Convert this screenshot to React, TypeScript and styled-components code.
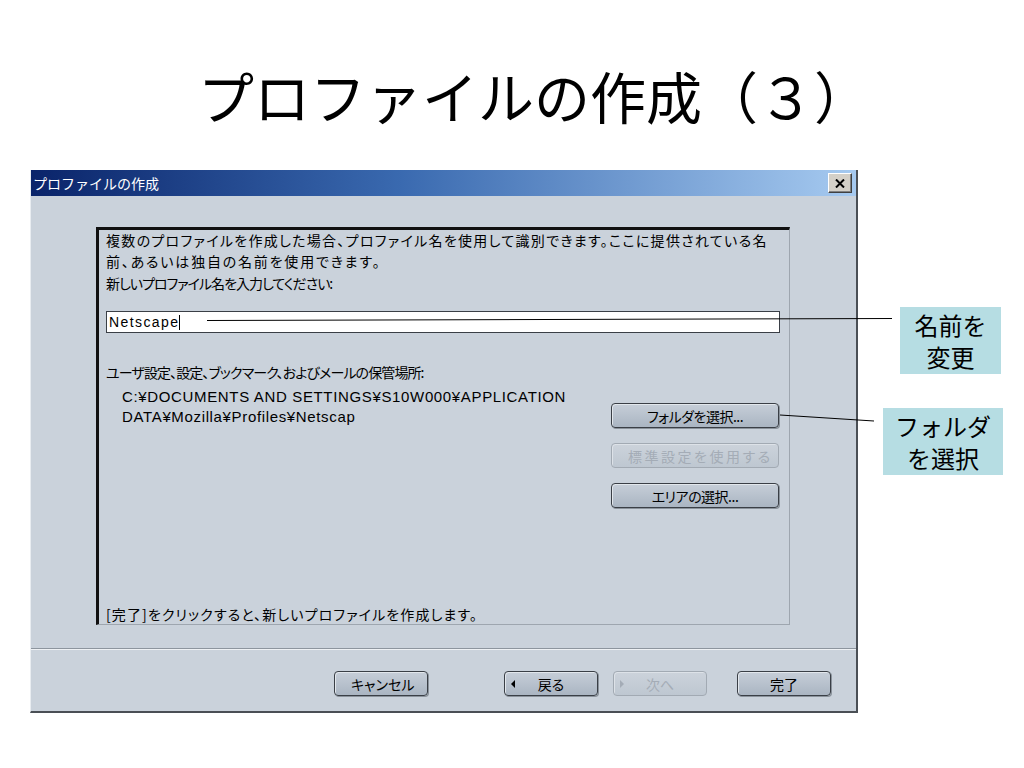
import React from "react";
import styled, {createGlobalStyle} from "styled-components";

const GlobalStyle = createGlobalStyle`
    html, body {
        margin: 0;
        padding: 0;
        background: #ffffff;
    }
    body {
        font-family: "Noto Sans CJK JP", "Noto Sans", sans-serif;
        color: #000;
    }
`;

const Slide = styled.div`
    width: 1024px;
    height: 768px;
    overflow: hidden;
    background: #fff;
`;

const SlideTitle = styled.h1`
    margin: 67px 0 0;
    padding-left: 44px;
    height: 56px;
    font-size: 56px;
    line-height: 56px;
    font-weight: 400;
    text-align: center;
    white-space: nowrap;
`;

// stage holds the dialog and the callouts next to it
const Stage = styled.div`
    position: relative;
    display: flex;
    align-items: flex-start;
    margin-top: 47px;
`;

const Dialog = styled.div`
    box-sizing: border-box;
    width: 828px;
    height: 543px;
    margin-left: 30px;
    display: flex;
    flex-direction: column;
    background: #cad2db;
    border-left: 1px solid #e9edf1;
    border-right: 2px solid #4a4f55;
    border-bottom: 2px solid #4a4f55;
    font-size: 14px;
    font-feature-settings: "palt";
`;

const TitleBar = styled.div`
    height: 26px;
    flex: none;
    display: flex;
    align-items: center;
    justify-content: space-between;
    padding: 0 4px 0 2px;
    background: linear-gradient(to right, #0a246a 0%, #3a6ab0 45%, #a6caf0 100%);
    color: #fff;
    font-size: 14px;
    font-feature-settings: normal;
`;

const CloseButton = styled.div`
    box-sizing: border-box;
    width: 24px;
    height: 20px;
    display: flex;
    align-items: center;
    justify-content: center;
    background: #d4d0c8;
    border-top: 1px solid #fff;
    border-left: 1px solid #fff;
    border-right: 1px solid #404040;
    border-bottom: 1px solid #404040;
    box-shadow: inset -1px -1px 0 #808080;
`;

const Body = styled.div`
    flex: 1;
    display: flex;
    flex-direction: column;
    padding: 31px 0 0 65px;
`;

const Panel = styled.div`
    box-sizing: border-box;
    width: 694px;
    height: 398px;
    display: flex;
    flex-direction: column;
    padding: 0 10px 0 7px;
    border-top: 3px solid #111;
    border-left: 3px solid #111;
    border-right: 1px solid #9ea6af;
    border-bottom: 1px solid #9ea6af;
`;

const Line = styled.div<{ $top?: number; $track?: number }>`
    line-height: 21px;
    white-space: nowrap;
    margin-top: ${({$top}) => $top ?? 0}px;
    letter-spacing: ${({$track}) => $track ?? 0}px;
`;

const NameInput = styled.div`
    box-sizing: border-box;
    width: 674px;
    height: 22px;
    margin-top: 17px;
    display: flex;
    align-items: center;
    padding-left: 2px;
    background: #fff;
    border: 1px solid #3a3f46;
    font-family: "Liberation Sans", Arial, sans-serif;
    font-size: 14px;
    letter-spacing: 1.4px;
`;

const Caret = styled.span`
    display: inline-block;
    width: 1px;
    height: 15px;
    background: #000;
`;

const LocationRow = styled.div`
    display: flex;
    justify-content: space-between;
    margin-top: 4px;
`;

const PathText = styled.div`
    padding-left: 16px;
    font-family: "Liberation Sans", Arial, sans-serif;
    font-size: 15px;
    letter-spacing: 0.65px;
    line-height: 20px;
    white-space: nowrap;
`;

const ButtonStack = styled.div`
    display: flex;
    flex-direction: column;
    gap: 15px;
    margin-top: 16px;
`;

const Button = styled.button<{ $width?: number; $gap?: number }>`
    box-sizing: border-box;
    width: ${({$width}) => $width ?? 94}px;
    height: 25px;
    margin: 0 0 0 ${({$gap}) => $gap ?? 0}px;
    padding: 0 6px;
    display: grid;
    grid-template-columns: 10px 1fr 10px;
    align-items: center;
    font-family: "Noto Sans CJK JP", sans-serif;
    font-feature-settings: "palt";
    font-size: 14px;
    color: #000;
    background: linear-gradient(#c6ced8, #aab5c2);
    border: 1px solid #3a3f46;
    border-radius: 4px;
    box-shadow: inset 1px 1px 0 #e2e7ec, 1px 1px 0 #8a929b;

    &:disabled {
        color: #a4acb6;
        background: linear-gradient(#ccd3db, #bec7d1);
        border-color: #a2aab3;
        box-shadow: inset 1px 1px 0 #dde2e8;
    }
`;

const ButtonLabel = styled.span<{ $track?: number }>`
    grid-column: 2;
    text-align: center;
    white-space: nowrap;
    letter-spacing: ${({$track}) => $track ?? 0}px;
`;

const Arrow = styled.span<{ $dir: "left" | "right" }>`
    grid-column: 1;
    width: 0;
    height: 0;
    border-top: 4px solid transparent;
    border-bottom: 4px solid transparent;
    ${({$dir}) => $dir === "left"
        ? "border-right: 4px solid currentColor;"
        : "border-left: 4px solid currentColor;"}
`;

const Footnote = styled.div`
    margin-top: auto;
    line-height: 20px;
    letter-spacing: 1.1px;
    white-space: nowrap;
`;

const Separator = styled.div`
    margin: 23px 0 0 -65px;
    height: 0;
    border-top: 1px solid #8d959e;
    border-bottom: 1px solid #eef1f4;
`;

const ActionRow = styled.div`
    display: flex;
    justify-content: flex-end;
    margin: 21px 0 0 -65px;
    padding-right: 25px;
`;

const Callouts = styled.div`
    display: flex;
    flex-direction: column;
    align-items: flex-start;
    gap: 34px;
    padding-top: 137px;
`;

const Callout = styled.div<{ $offset: number; $width: number }>`
    margin-left: ${({$offset}) => $offset}px;
    width: ${({$width}) => $width}px;
    height: 67px;
    display: flex;
    flex-direction: column;
    justify-content: center;
    background: #b6dde3;
    font-size: 24px;
    line-height: 32px;
    text-align: center;
    white-space: nowrap;
`;

const Connectors = styled.svg`
    position: absolute;
    left: 0;
    top: 0;
    width: 1024px;
    height: 560px;
    pointer-events: none;
`;

function DialogButton({label, width, gap, disabled, arrow, track}: {
    label: string;
    width?: number;
    gap?: number;
    disabled?: boolean;
    arrow?: "left" | "right";
    track?: number;
}) {
    return (
        <Button $width={width} $gap={gap} disabled={disabled}>
            {arrow && <Arrow $dir={arrow}/>}
            <ButtonLabel $track={track}>{label}</ButtonLabel>
        </Button>
    );
}

export default function App() {
    return (
        <Slide>
            <GlobalStyle/>
            <SlideTitle>プロファイルの作成（３）</SlideTitle>
            <Stage>
                <Dialog>
                    <TitleBar>
                        <span>プロファイルの作成</span>
                        <CloseButton>
                            <svg width="10" height="9" viewBox="0 0 10 9">
                                <path d="M1 0.5 L9 8.5 M9 0.5 L1 8.5" stroke="#000" strokeWidth="2"/>
                            </svg>
                        </CloseButton>
                    </TitleBar>
                    <Body>
                        <Panel>
                            <Line $track={1.3}>複数のプロファイルを作成した場合、プロファイル名を使用して識別できます。ここに提供されている名</Line>
                            <Line $track={1.8}>前、あるいは独自の名前を使用できます。</Line>
                            <Line $top={1} $track={-1}>新しいプロファイル名を入力してください:</Line>
                            <NameInput>Netscape<Caret/></NameInput>
                            <Line $top={29} $track={-0.9}>ユーザ設定、設定、ブックマーク、およびメールの保管場所:</Line>
                            <LocationRow>
                                <PathText>
                                    C:¥DOCUMENTS AND SETTINGS¥S10W000¥APPLICATION<br/>
                                    DATA¥Mozilla¥Profiles¥Netscap
                                </PathText>
                                <ButtonStack>
                                    <DialogButton label="フォルダを選択..." width={168} track={-0.5}/>
                                    <DialogButton label="標準設定を使用する" width={168} track={2.5} disabled/>
                                    <DialogButton label="エリアの選択..." width={168} track={-0.5}/>
                                </ButtonStack>
                            </LocationRow>
                            <Footnote>[完了]をクリックすると、新しいプロファイルを作成します。</Footnote>
                        </Panel>
                        <Separator/>
                        <ActionRow>
                            <DialogButton label="キャンセル"/>
                            <DialogButton label="戻る" gap={76} arrow="left"/>
                            <DialogButton label="次へ" gap={15} arrow="right" disabled/>
                            <DialogButton label="完了" gap={30}/>
                        </ActionRow>
                    </Body>
                </Dialog>
                <Callouts>
                    <Callout $offset={42} $width={101}>
                        <span>名前を</span>
                        <span>変更</span>
                    </Callout>
                    <Callout $offset={25} $width={120}>
                        <span>フォルダ</span>
                        <span>を選択</span>
                    </Callout>
                </Callouts>
                <Connectors viewBox="0 0 1024 560">
                    <line x1="207" y1="150.5" x2="892" y2="148.5" stroke="#000" strokeWidth="1"/>
                    <line x1="780" y1="245" x2="874" y2="251" stroke="#000" strokeWidth="1"/>
                </Connectors>
            </Stage>
        </Slide>
    );
}
